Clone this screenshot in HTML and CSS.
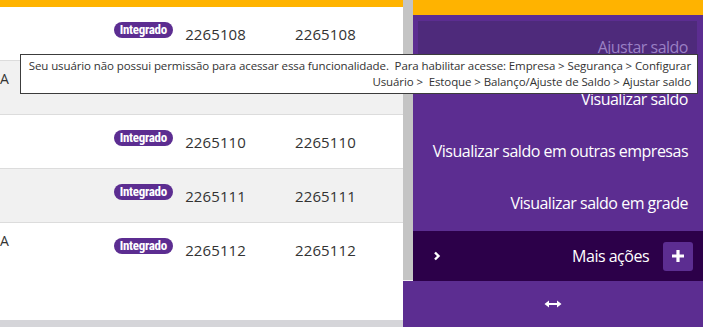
FILE: index.html
```html
<!DOCTYPE html>
<html lang="pt-BR">
<head>
    <meta charset="UTF-8">
    <title>Estoque</title>
    <link rel="stylesheet" href="styles.css">
</head>
<body>
    <div class="grid-area">
        <div class="grid-top"></div>
        <div class="grid-rows">
            <div class="row">
                <div class="cell desc"></div>
                <div class="cell status"><span class="badge">Integrado</span></div>
                <div class="cell num">2265108</div>
                <div class="cell num">2265108</div>
            </div>
            <!-- linha coberta pelo tooltip -->
            <div class="row alt">
                <div class="cell desc">A</div>
            </div>
            <div class="row">
                <div class="cell desc"></div>
                <div class="cell status"><span class="badge">Integrado</span></div>
                <div class="cell num">2265110</div>
                <div class="cell num">2265110</div>
            </div>
            <div class="row alt">
                <div class="cell desc"></div>
                <div class="cell status"><span class="badge">Integrado</span></div>
                <div class="cell num">2265111</div>
                <div class="cell num">2265111</div>
            </div>
            <div class="row last">
                <div class="cell desc">A</div>
                <div class="cell status"><span class="badge">Integrado</span></div>
                <div class="cell num">2265112</div>
                <div class="cell num">2265112</div>
            </div>
        </div>
        <div class="hscroll"></div>
    </div>

    <div class="side">
        <div class="side-upper">
            <div class="vscroll"></div>
            <div class="panel">
                <div class="panel-top"></div>
                <ul class="actions">
                    <li class="action disabled">Ajustar saldo</li>
                    <li class="action">Visualizar saldo</li>
                    <li class="action">Visualizar saldo em outras empresas</li>
                    <li class="action">Visualizar saldo em grade</li>
                </ul>
                <div class="more">
                    <span class="chevron">
                        <svg width="8" height="10" viewBox="0 0 8 10"><path d="M2 1.5 L5.5 5 L2 8.5" fill="none" stroke="#fff" stroke-width="2.4"/></svg>
                    </span>
                    <span class="more-label">Mais ações</span>
                    <span class="plus">
                        <svg width="14" height="14" viewBox="0 0 14 14"><path d="M7 1 V13 M1 7 H13" stroke="#fff" stroke-width="3.2"/></svg>
                    </span>
                </div>
            </div>
        </div>
        <div class="side-bottom">
            <svg width="18" height="8" viewBox="0 0 18 8"><path d="M3 4 H15" stroke="#fff" stroke-width="2"/><path d="M0.5 4 L5 0.5 V7.5 Z M17.5 4 L13 0.5 V7.5 Z" fill="#fff"/></svg>
        </div>
    </div>

    <div class="tooltip">Seu usuário não possui permissão para acessar essa funcionalidade.&nbsp; Para habilitar acesse: Empresa &gt; Segurança &gt; Configurar Usuário &gt;&nbsp; Estoque &gt; Balanço/Ajuste de Saldo &gt; Ajustar saldo</div>
</body>
</html>
```

FILE: styles.css
```css
body {
    margin: 0;
    width: 703px;
    height: 327px;
    overflow: hidden;
    display: flex;
    background-color: #ffffff;
    font-family: "Open Sans", "Noto Sans", sans-serif;
    position: relative;
}

.grid-area {
    width: 403px;
    display: flex;
    flex-direction: column;
}

.grid-top {
    height: 7px;
    background-color: #ffb300;
}

.grid-rows {
    flex: 1;
}

.row {
    display: flex;
    height: 53px;
    border-bottom: 1px solid #dcdcdc;
}

.row.alt {
    background-color: #f1f1f1;
}

.row.last {
    border-bottom: none;
}

.cell {
    padding-top: 10px;
    box-sizing: border-box;
}

.desc {
    width: 115px;
    font-size: 14px;
    color: #333;
    line-height: 16px;
}

.status {
    width: 75px;
    padding-left: 3px;
}

.num {
    width: 114px;
    padding-top: 19px;
    padding-left: 2px;
    font-size: 15px;
    line-height: 17px;
    color: #333;
    letter-spacing: 0.1px;
}

.badge {
    display: inline-block;
    width: 59px;
    height: 16px;
    border-radius: 8px;
    background-color: #5c2d91;
    color: #fff;
    text-align: center;
    font-family: "Liberation Sans Narrow", "Roboto Condensed", "Liberation Sans", sans-serif;
    font-weight: bold;
    font-size: 13px;
    line-height: 16px;
    letter-spacing: -0.3px;
}

.hscroll {
    height: 7px;
    background-color: #d5d5d9;
}

.side {
    flex: 1;
    display: flex;
    flex-direction: column;
}

.side-upper {
    height: 281px;
    display: flex;
}

.vscroll {
    width: 10px;
    background-color: #c4c4c4;
    border-bottom: 1px solid #f0f0f0;
}

.panel {
    flex: 1;
    display: flex;
    flex-direction: column;
    background-color: #5c2d91;
}

.panel-top {
    height: 15px;
    background-color: #ffb300;
}

.actions {
    list-style: none;
    margin: 0;
    padding: 6px 6px 0 5px;
    flex: 1;
}

.action {
    height: 52px;
    display: flex;
    align-items: center;
    justify-content: flex-end;
    padding-right: 9px;
    color: #fff;
    font-size: 16px;
    letter-spacing: -0.5px;
}

.action.disabled {
    background-color: #4e2a7b;
    color: #9a80c4;
}

.more {
    height: 50px;
    display: flex;
    align-items: center;
    background-color: #2c0049;
    color: #fff;
    padding: 0 10px 0 20px;
}

.chevron {
    display: flex;
}

.more-label {
    margin-left: auto;
    margin-right: 14px;
    font-size: 16px;
    letter-spacing: -0.5px;
}

.plus {
    width: 30px;
    height: 29px;
    border-radius: 3px;
    background-color: #5c2d91;
    display: flex;
    align-items: center;
    justify-content: center;
}

.side-bottom {
    flex: 1;
    background-color: #5c2d91;
    display: flex;
    align-items: center;
    justify-content: center;
}

.tooltip {
    position: absolute;
    left: 20px;
    top: 54px;
    width: 678px;
    height: 40px;
    box-sizing: border-box;
    padding: 3px 6px;
    border: 1px solid #3c3c3c;
    background-color: #fff;
    color: #333;
    font-size: 11.5px;
    letter-spacing: -0.1px;
    line-height: 16px;
    text-align: right;
}
```
